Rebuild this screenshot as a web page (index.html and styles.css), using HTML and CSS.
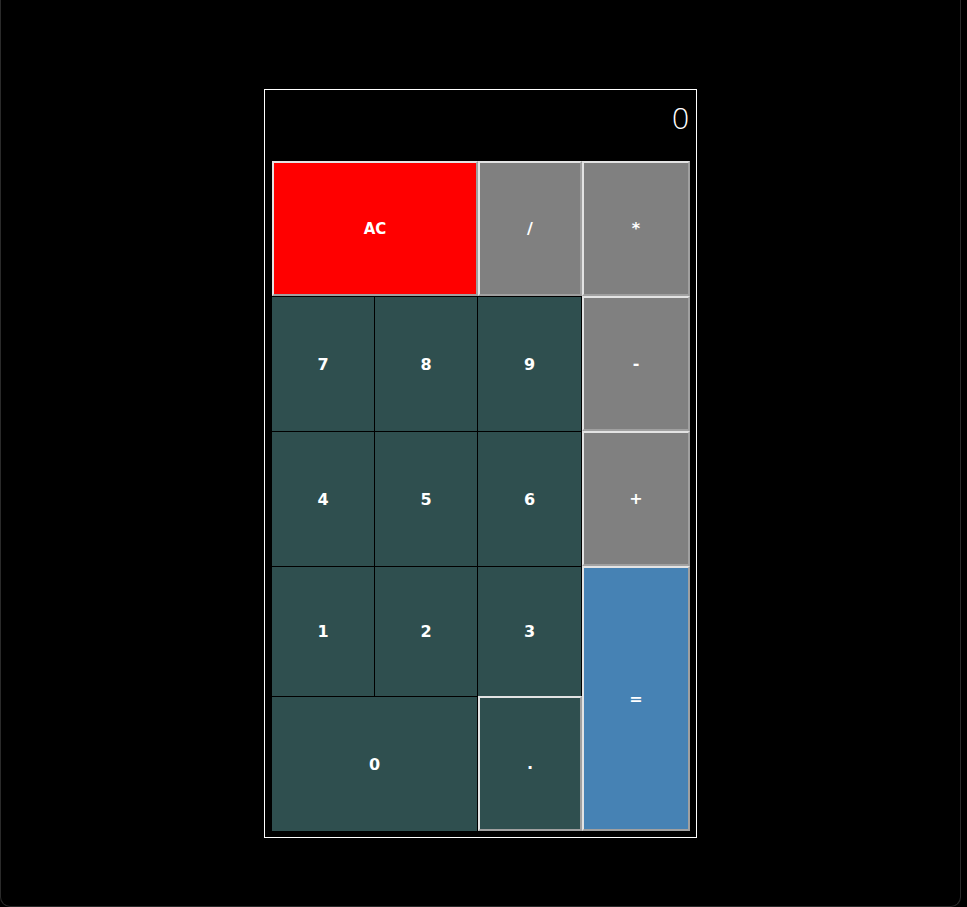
FILE: index.html
```html
<!DOCTYPE html>
<html>
<head>
<meta charset="utf-8">
<title>Calculator</title>
<link rel="stylesheet" href="styles.css">
</head>
<body>
<div class="frame">
  <div class="calculator">
    <div class="display">0</div>
    <div class="keys">
      <button class="key key-clear span-2">AC</button>
      <button class="key key-op">/</button>
      <button class="key key-op">*</button>
      <button class="key key-num">7</button>
      <button class="key key-num">8</button>
      <button class="key key-num">9</button>
      <button class="key key-op">-</button>
      <button class="key key-num">4</button>
      <button class="key key-num">5</button>
      <button class="key key-num">6</button>
      <button class="key key-op">+</button>
      <button class="key key-num">1</button>
      <button class="key key-num">2</button>
      <button class="key key-num">3</button>
      <button class="key key-equals span-rows">=</button>
      <button class="key key-num span-2">0</button>
      <button class="key key-dot">.</button>
    </div>
  </div>
</div>
</body>
</html>
```
FILE: styles.css
```css
* {
  box-sizing: border-box;
}

html, body {
  margin: 0;
  padding: 0;
  background: #000;
}

.frame {
  width: 961px;
  height: 907px;
  border: 1px solid #2a2a2a;
  border-top: none;
  border-radius: 0 0 10px 10px;
  padding-top: 89px;
}

.calculator {
  width: 433px;
  margin: 0 0 0 263px;
  border: 1px solid #fff;
  padding: 0 7px 6px 7px;
  background: #000;
}

.display {
  height: 71px;
  padding-top: 13px;
  text-align: right;
  color: #fff;
  font-family: "Open Sans", "DejaVu Sans", sans-serif;
  font-weight: 300;
  font-size: 30px;
  line-height: 30px;
}

.keys {
  display: grid;
  grid-template-columns: 103px 103px 104px 108px;
  grid-template-rows: 135px 135px 135px 130px 135px;
}

.key {
  margin: 0;
  padding: 0;
  color: #fff;
  font-family: "DejaVu Sans", Verdana, sans-serif;
  font-weight: bold;
  font-size: 16px;
  border-style: solid;
  border-width: 2px;
  border-color: #e3e3e3 #a0a0a0 #a0a0a0 #e3e3e3;
}

.span-2 {
  grid-column: span 2;
}

.span-rows {
  grid-row: span 2;
}

.key-clear {
  background: #ff0000;
  font-size: 15px;
}

.key-op {
  background: #808080;
}

.key-equals {
  background: #4682b4;
}

.key-num {
  background: #2f4f4f;
  border: 0;
  border-top: 1px solid #000;
  border-right: 1px solid #000;
}

.key-dot {
  background: #2f4f4f;
}
```
